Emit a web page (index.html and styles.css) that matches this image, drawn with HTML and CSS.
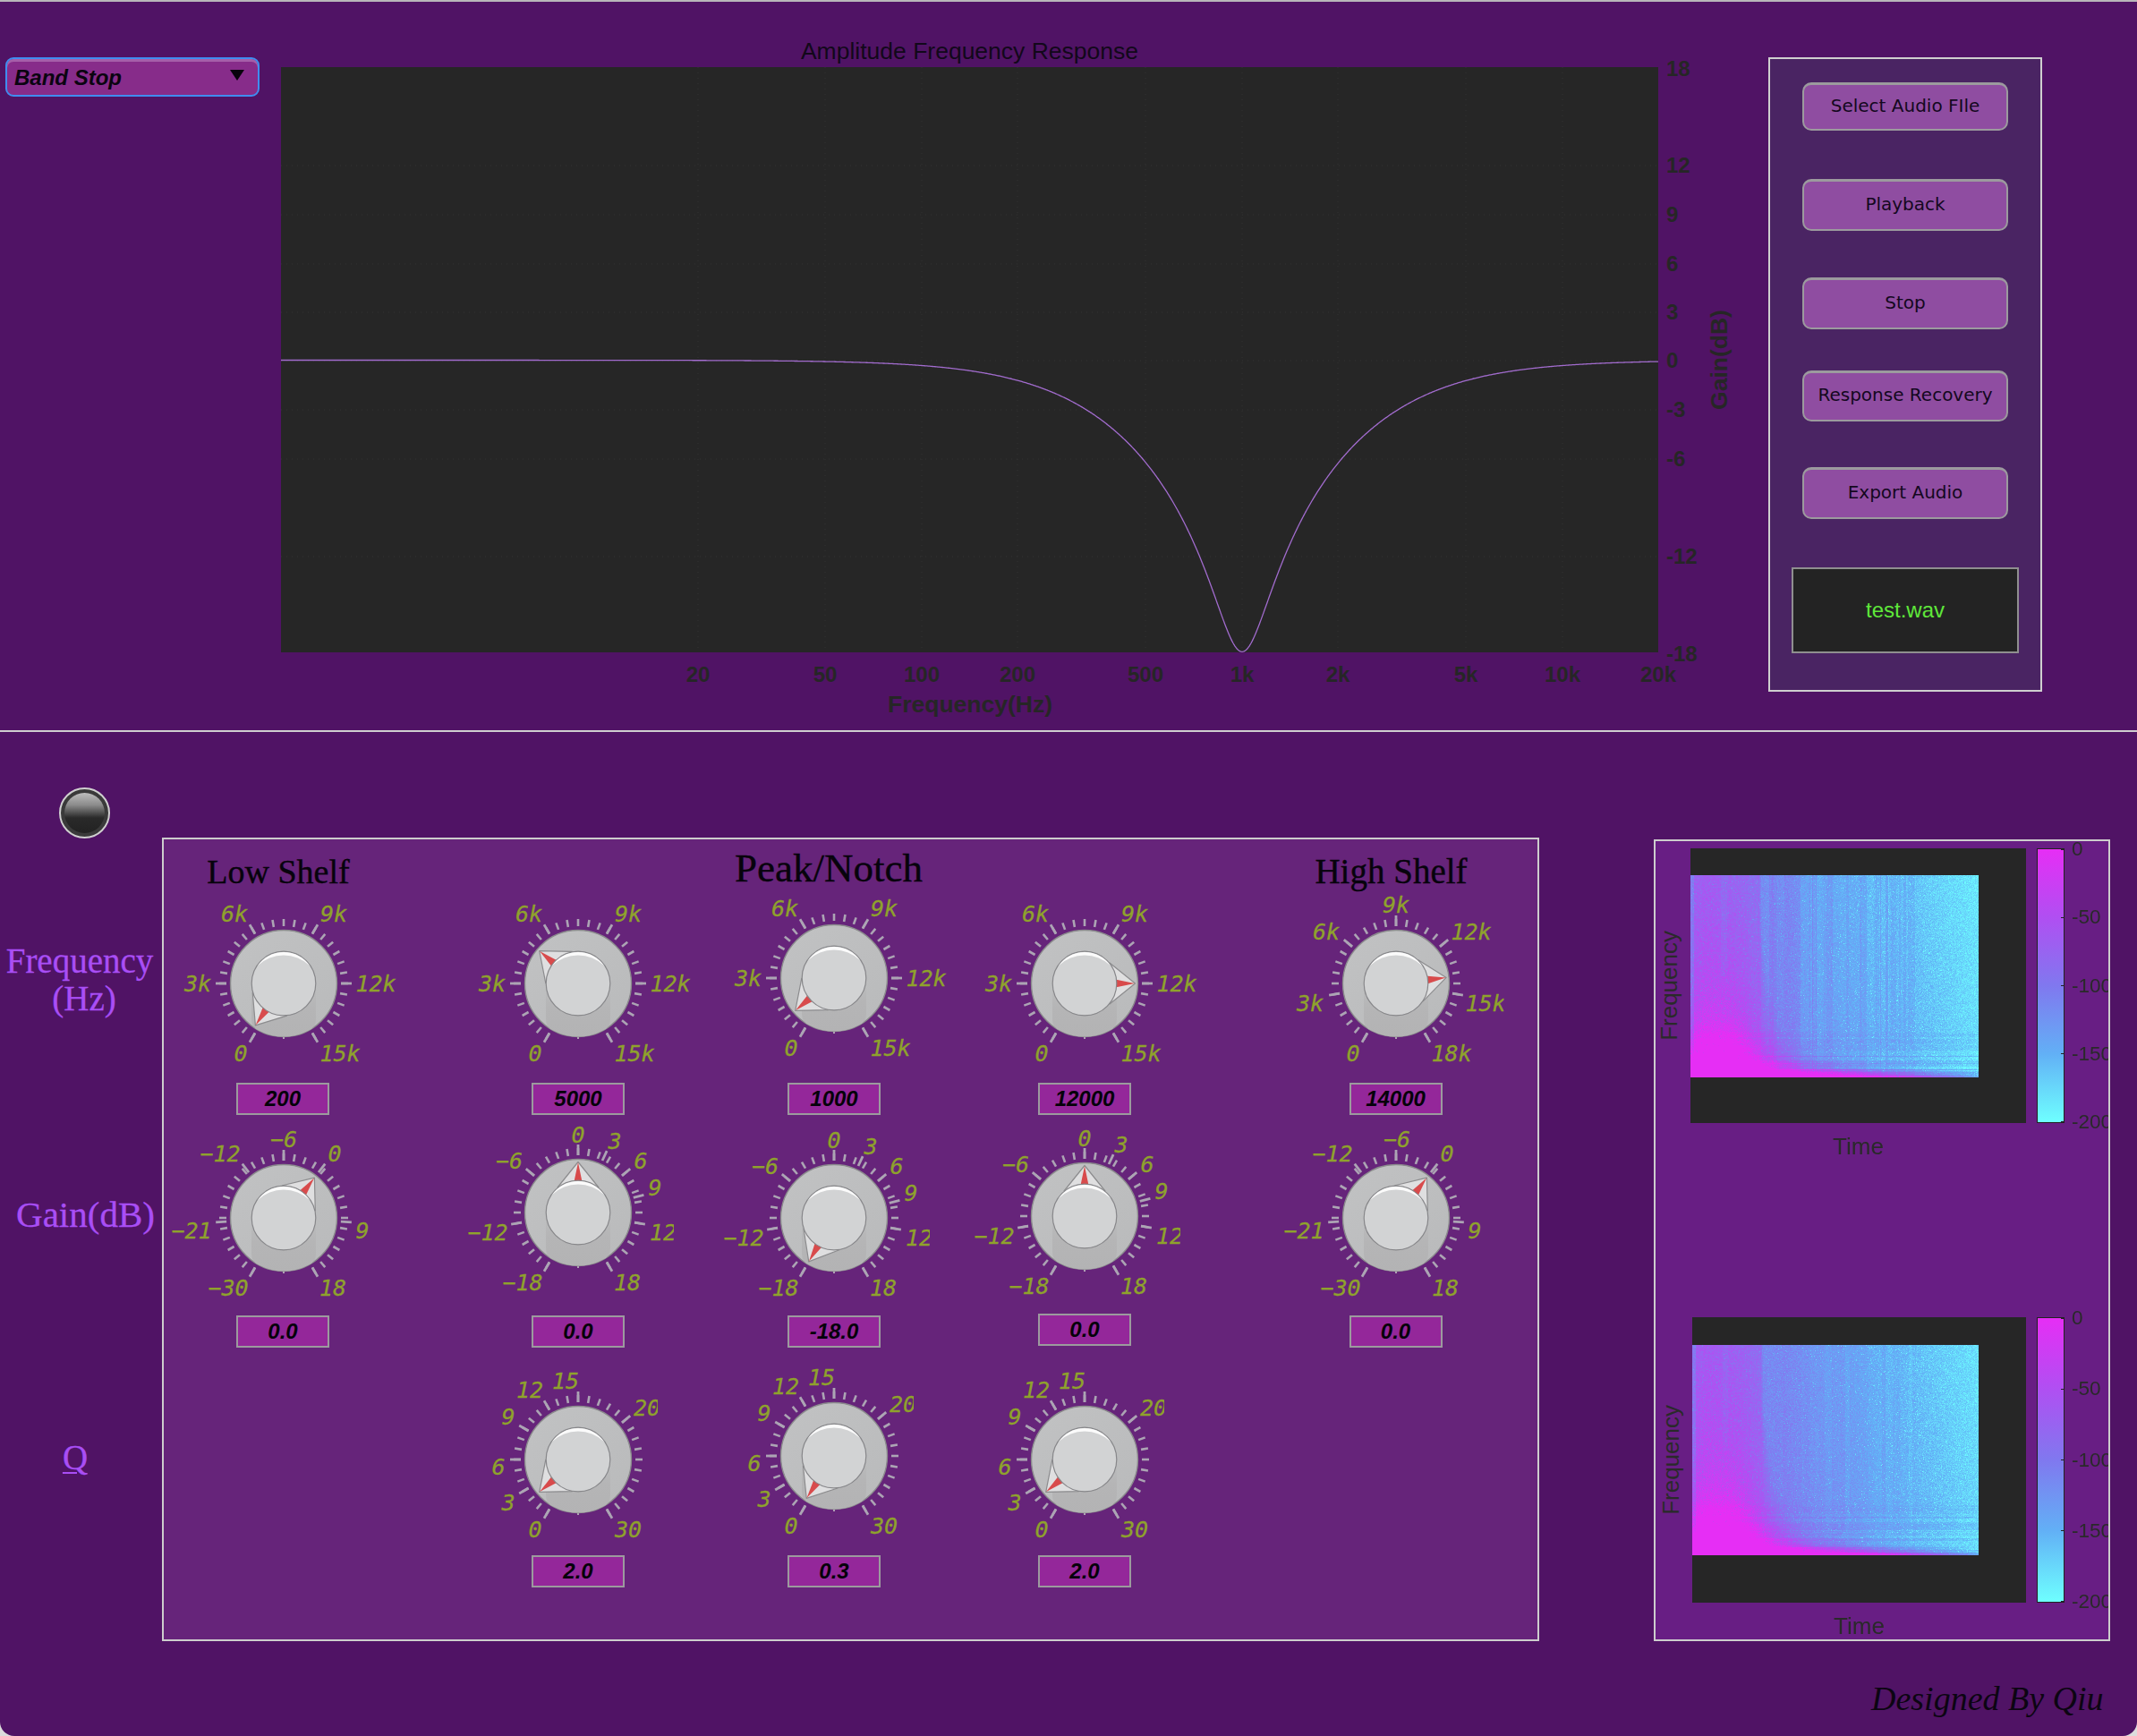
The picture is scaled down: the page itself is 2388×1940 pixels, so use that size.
FILE: index.html
```html
<!DOCTYPE html>
<html lang="en">
<head>
<meta charset="utf-8">
<title>Equalizer</title>
<link rel="stylesheet" href="styles.css">
</head>
<body>
<svg class="defs" aria-hidden="true">
  <defs>
    <linearGradient id="base-fill" x1="0" y1="0" x2="1" y2="1">
      <stop offset="0" stop-color="#c1c2c3"/><stop offset="1" stop-color="#b9babb"/>
    </linearGradient>
    <linearGradient id="shade-fill" x1="0" y1="0" x2="0" y2="1">
      <stop offset="0" stop-color="#bcbdbe"/><stop offset="0.45" stop-color="#b5b5b6"/><stop offset="1" stop-color="#b3b3b4"/>
    </linearGradient>
    <line id="tick" class="tick" y1="-64" y2="-72"/>
    <line id="major" class="tick tick-major" y1="-64" y2="-76"/>
    <g id="minor">
      <use href="#tick" transform="rotate(-150)"/><use href="#tick" transform="rotate(-140)"/><use href="#tick" transform="rotate(-130)"/><use href="#tick" transform="rotate(-120)"/><use href="#tick" transform="rotate(-110)"/><use href="#tick" transform="rotate(-100)"/><use href="#tick" transform="rotate(-90)"/><use href="#tick" transform="rotate(-80)"/><use href="#tick" transform="rotate(-70)"/><use href="#tick" transform="rotate(-60)"/><use href="#tick" transform="rotate(-50)"/><use href="#tick" transform="rotate(-40)"/><use href="#tick" transform="rotate(-30)"/><use href="#tick" transform="rotate(-20)"/><use href="#tick" transform="rotate(-10)"/><use href="#tick"/><use href="#tick" transform="rotate(10)"/><use href="#tick" transform="rotate(20)"/><use href="#tick" transform="rotate(30)"/><use href="#tick" transform="rotate(40)"/><use href="#tick" transform="rotate(50)"/><use href="#tick" transform="rotate(60)"/><use href="#tick" transform="rotate(70)"/><use href="#tick" transform="rotate(80)"/><use href="#tick" transform="rotate(90)"/><use href="#tick" transform="rotate(100)"/><use href="#tick" transform="rotate(110)"/><use href="#tick" transform="rotate(120)"/><use href="#tick" transform="rotate(130)"/><use href="#tick" transform="rotate(140)"/><use href="#tick" transform="rotate(150)"/>
    </g>
    <g id="maj-freq"><use href="#major" transform="rotate(-150)"/><use href="#major" transform="rotate(-90)"/><use href="#major" transform="rotate(-30)"/><use href="#major" transform="rotate(30)"/><use href="#major" transform="rotate(90)"/><use href="#major" transform="rotate(150)"/></g>
    <g id="maj-hsfreq"><use href="#major" transform="rotate(-150)"/><use href="#major" transform="rotate(-100)"/><use href="#major" transform="rotate(-50)"/><use href="#major"/><use href="#major" transform="rotate(50)"/><use href="#major" transform="rotate(100)"/><use href="#major" transform="rotate(150)"/></g>
    <g id="maj-shelf"><use href="#major" transform="rotate(-150)"/><use href="#major" transform="rotate(-93.75)"/><use href="#major" transform="rotate(-37.5)"/><use href="#major"/><use href="#major" transform="rotate(37.5)"/><use href="#major" transform="rotate(93.75)"/><use href="#major" transform="rotate(150)"/></g>
    <g id="maj-peak"><use href="#major" transform="rotate(-150)"/><use href="#major" transform="rotate(-100)"/><use href="#major" transform="rotate(-50)"/><use href="#major"/><use href="#major" transform="rotate(25)"/><use href="#major" transform="rotate(50)"/><use href="#major" transform="rotate(75)"/><use href="#major" transform="rotate(100)"/><use href="#major" transform="rotate(150)"/></g>
    <g id="maj-q"><use href="#major" transform="rotate(-150)"/><use href="#major" transform="rotate(-120)"/><use href="#major" transform="rotate(-90)"/><use href="#major" transform="rotate(-60)"/><use href="#major" transform="rotate(-30)"/><use href="#major"/><use href="#major" transform="rotate(50)"/><use href="#major" transform="rotate(150)"/></g>
    <g id="knob-base">
      <line class="tick-notch" y1="60" y2="62"/>
      <circle class="knob-rim" r="59.5"/>
      <path class="knob-shade" d="M-36 0V40Q-36 50-27 53A59 59 0 0 0 27 53Q36 50 36 40V0Z"/>
    </g>
    <g id="pointer">
      <path class="pointer-body" d="M0-56.5L-23-28H23Z"/>
      <path class="pointer-red" d="M0-56L-4.8-33H4.8Z"/>
    </g>
    <g id="knob-cap">
      <circle class="knob-cap" r="35.8"/>
      <path class="knob-shine" d="M-29-20A35.4 35.4 0 0 1 29-20A42 42 0 0 0-29-20Z"/>
    </g>
  </defs>
</svg>

<div class="app">
  <section class="top">
    <div class="dropdown"><span>Band Stop</span><i class="caret"></i></div>

    <svg class="response" viewBox="314 30 1640 786">
      <rect class="plot-bg" x="314" y="75" width="1539" height="654"/>
      <path class="plot-grid" d="M780 75V729M922 75V729M1030 75V729M1137 75V729M1280 75V729M1388 75V729M1495 75V729M1638 75V729M1746 75V729M314 185H1853M314 240H1853M314 295H1853M314 349H1853M314 403H1853M314 458H1853M314 513H1853M314 622H1853"/>
      <path id="curve" class="plot-curve" d=""/>
      <text class="plot-title" x="1083.5" y="57">Amplitude Frequency Response</text>
      <g class="plot-ticks">
        <text x="1862" y="76">18</text><text x="1862" y="184">12</text><text x="1862" y="239">9</text><text x="1862" y="294">6</text><text x="1862" y="348">3</text><text x="1862" y="402">0</text><text x="1862" y="457">-3</text><text x="1862" y="512">-6</text><text x="1862" y="621">-12</text><text x="1862" y="730">-18</text>
      </g>
      <g class="plot-ticks plot-ticks-x">
        <text x="780" y="753">20</text><text x="922" y="753">50</text><text x="1030" y="753">100</text><text x="1137" y="753">200</text><text x="1280" y="753">500</text><text x="1388" y="753">1k</text><text x="1495" y="753">2k</text><text x="1638" y="753">5k</text><text x="1746" y="753">10k</text><text x="1853" y="753">20k</text>
      </g>
      <text class="plot-axis" x="1084" y="787">Frequency(Hz)</text>
      <text class="plot-axis" transform="translate(1921 402) rotate(-90)">Gain(dB)</text>
    </svg>

    <aside class="transport">
      <button class="btn btn-select">Select Audio FIle</button>
      <button class="btn btn-play">Playback</button>
      <button class="btn btn-stop">Stop</button>
      <button class="btn btn-recover">Response Recovery</button>
      <button class="btn btn-export">Export Audio</button>
      <div class="file-name">test.wav</div>
    </aside>
  </section>

  <section class="bottom">
    <div class="side">
      <div class="led"><div class="led-glass"></div></div>
      <div class="side-label side-freq">Frequency<br><span class="side-unit">(Hz)</span></div>
      <div class="side-label side-gain">Gain(dB)</div>
      <div class="side-label side-q">Q</div>
    </div>

    <div class="eq">
      <h2 class="eq-head head-low">Low Shelf</h2>
      <h2 class="eq-head head-peak">Peak/Notch</h2>
      <h2 class="eq-head head-high">High Shelf</h2>

      <!-- Low shelf -->
      <div class="knob row-1 col-1">
        <svg class="dial" viewBox="-130 -110 260 220"><use href="#minor"/><use href="#maj-freq"/><use href="#knob-base"/><use href="#pointer" transform="rotate(-146)"/><use href="#knob-cap"/>
          <g class="scale"><text x="-48" y="78">0</text><text x="-96" y="0">3k</text><text x="-55" y="-78">6k</text><text x="56" y="-78">9k</text><text x="103" y="0">12k</text><text x="63" y="78">15k</text></g></svg>
        <div class="value">200</div>
      </div>
      <div class="knob row-2 col-1">
        <svg class="dial" viewBox="-130 -110 260 220"><use href="#minor"/><use href="#maj-shelf"/><use href="#knob-base"/><use href="#pointer" transform="rotate(37.5)"/><use href="#knob-cap"/>
          <g class="scale"><text x="-62" y="78">−30</text><text x="-103" y="14">−21</text><text x="-71" y="-72">−12</text><text x="0" y="-88">−6</text><text x="57" y="-72">0</text><text x="88" y="14">9</text><text x="55" y="78">18</text></g></svg>
        <div class="value">0.0</div>
      </div>

      <!-- Peak 1 -->
      <div class="knob row-1 col-2">
        <svg class="dial" viewBox="-130 -110 260 220"><use href="#minor"/><use href="#maj-freq"/><use href="#knob-base"/><use href="#pointer" transform="rotate(-50)"/><use href="#knob-cap"/>
          <g class="scale"><text x="-48" y="78">0</text><text x="-96" y="0">3k</text><text x="-55" y="-78">6k</text><text x="56" y="-78">9k</text><text x="103" y="0">12k</text><text x="63" y="78">15k</text></g></svg>
        <div class="value">5000</div>
      </div>
      <div class="knob row-2 col-2 lift-6">
        <svg class="dial clip-107" viewBox="-130 -110 260 220"><use href="#minor"/><use href="#maj-peak"/><use href="#knob-base"/><use href="#pointer"/><use href="#knob-cap"/>
          <g class="scale"><text x="-62" y="78">−18</text><text x="-101" y="22">−12</text><text x="-77" y="-58">−6</text><text x="0" y="-87">0</text><text x="41" y="-80">3</text><text x="70" y="-58">6</text><text x="86" y="-28">9</text><text x="95" y="22">12</text><text x="55" y="78">18</text></g></svg>
        <div class="value">0.0</div>
      </div>
      <div class="knob row-3 col-2">
        <svg class="dial clip-89" viewBox="-130 -110 260 220"><use href="#minor"/><use href="#maj-q"/><use href="#knob-base"/><use href="#pointer" transform="rotate(-130)"/><use href="#knob-cap"/>
          <g class="scale"><text x="-48" y="78">0</text><text x="-78" y="48">3</text><text x="-89" y="8">6</text><text x="-78" y="-48">9</text><text x="-54" y="-78">12</text><text x="-14" y="-88">15</text><text x="77" y="-58">20</text><text x="56" y="78">30</text></g></svg>
        <div class="value">2.0</div>
      </div>

      <!-- Peak 2 -->
      <div class="knob row-1 col-3 lift-6">
        <svg class="dial" viewBox="-130 -110 260 220"><use href="#minor"/><use href="#maj-freq"/><use href="#knob-base"/><use href="#pointer" transform="rotate(-130)"/><use href="#knob-cap"/>
          <g class="scale"><text x="-48" y="78">0</text><text x="-96" y="0">3k</text><text x="-55" y="-78">6k</text><text x="56" y="-78">9k</text><text x="103" y="0">12k</text><text x="63" y="78">15k</text></g></svg>
        <div class="value">1000</div>
      </div>
      <div class="knob row-2 col-3">
        <svg class="dial clip-107" viewBox="-130 -110 260 220"><use href="#minor"/><use href="#maj-peak"/><use href="#knob-base"/><use href="#pointer" transform="rotate(-150)"/><use href="#knob-cap"/>
          <g class="scale"><text x="-62" y="78">−18</text><text x="-101" y="22">−12</text><text x="-77" y="-58">−6</text><text x="0" y="-87">0</text><text x="41" y="-80">3</text><text x="70" y="-58">6</text><text x="86" y="-28">9</text><text x="95" y="22">12</text><text x="55" y="78">18</text></g></svg>
        <div class="value">-18.0</div>
      </div>
      <div class="knob row-3 col-3 lift-4">
        <svg class="dial clip-89" viewBox="-130 -110 260 220"><use href="#minor"/><use href="#maj-q"/><use href="#knob-base"/><use href="#pointer" transform="rotate(-147)"/><use href="#knob-cap"/>
          <g class="scale"><text x="-48" y="78">0</text><text x="-78" y="48">3</text><text x="-89" y="8">6</text><text x="-78" y="-48">9</text><text x="-54" y="-78">12</text><text x="-14" y="-88">15</text><text x="77" y="-58">20</text><text x="56" y="78">30</text></g></svg>
        <div class="value">0.3</div>
      </div>

      <!-- Peak 3 -->
      <div class="knob row-1 col-4">
        <svg class="dial" viewBox="-130 -110 260 220"><use href="#minor"/><use href="#maj-freq"/><use href="#knob-base"/><use href="#pointer" transform="rotate(90)"/><use href="#knob-cap"/>
          <g class="scale"><text x="-96" y="0">3k</text><text x="-48" y="78">0</text><text x="-55" y="-78">6k</text><text x="56" y="-78">9k</text><text x="103" y="0">12k</text><text x="63" y="78">15k</text></g></svg>
        <div class="value">12000</div>
      </div>
      <div class="knob row-2 col-4 lift-2-all">
        <svg class="dial clip-107" viewBox="-130 -110 260 220"><use href="#minor"/><use href="#maj-peak"/><use href="#knob-base"/><use href="#pointer"/><use href="#knob-cap"/>
          <g class="scale"><text x="-62" y="78">−18</text><text x="-101" y="22">−12</text><text x="-77" y="-58">−6</text><text x="0" y="-87">0</text><text x="41" y="-80">3</text><text x="70" y="-58">6</text><text x="86" y="-28">9</text><text x="95" y="22">12</text><text x="55" y="78">18</text></g></svg>
        <div class="value">0.0</div>
      </div>
      <div class="knob row-3 col-4">
        <svg class="dial clip-89" viewBox="-130 -110 260 220"><use href="#minor"/><use href="#maj-q"/><use href="#knob-base"/><use href="#pointer" transform="rotate(-130)"/><use href="#knob-cap"/>
          <g class="scale"><text x="-48" y="78">0</text><text x="-78" y="48">3</text><text x="-89" y="8">6</text><text x="-78" y="-48">9</text><text x="-54" y="-78">12</text><text x="-14" y="-88">15</text><text x="77" y="-58">20</text><text x="56" y="78">30</text></g></svg>
        <div class="value">2.0</div>
      </div>

      <!-- High shelf -->
      <div class="knob row-1 col-5">
        <svg class="dial clip-121" viewBox="-130 -110 260 220"><use href="#minor"/><use href="#maj-hsfreq"/><use href="#knob-base"/><use href="#pointer" transform="rotate(83.3)"/><use href="#knob-cap"/>
          <g class="scale"><text x="-48" y="78">0</text><text x="-96" y="22">3k</text><text x="-78" y="-58">6k</text><text x="0" y="-87.5">9k</text><text x="84" y="-58">12k</text><text x="100" y="22">15k</text><text x="62" y="78">18k</text></g></svg>
        <div class="value">14000</div>
      </div>
      <div class="knob row-2 col-5">
        <svg class="dial" viewBox="-130 -110 260 220"><use href="#minor"/><use href="#maj-shelf"/><use href="#knob-base"/><use href="#pointer" transform="rotate(37.5)"/><use href="#knob-cap"/>
          <g class="scale"><text x="-62" y="78">−30</text><text x="-103" y="14">−21</text><text x="-71" y="-72">−12</text><text x="1" y="-88">−6</text><text x="57" y="-72">0</text><text x="88" y="14">9</text><text x="55" y="78">18</text></g></svg>
        <div class="value">0.0</div>
      </div>
    </div>

    <div class="right">
      <div class="spectra">
        <figure class="chart chart-a">
          <figcaption class="chart-y">Frequency</figcaption>
          <div class="chart-plot"><canvas id="spec-a" class="chart-image" width="322" height="226"></canvas></div>
          <div class="cbar"><i></i><i></i><i></i><i></i><i></i></div>
          <div class="cbar-labels"><span>0</span><span>-50</span><span>-100</span><span>-150</span><span>-200</span></div>
          <div class="chart-x">Time</div>
        </figure>
        <figure class="chart chart-b">
          <figcaption class="chart-y">Frequency</figcaption>
          <div class="chart-plot"><canvas id="spec-b" class="chart-image" width="320" height="235"></canvas></div>
          <div class="cbar"><i></i><i></i><i></i><i></i><i></i></div>
          <div class="cbar-labels"><span>0</span><span>-50</span><span>-100</span><span>-150</span><span>-200</span></div>
          <div class="chart-x">Time</div>
        </figure>
      </div>
      <div class="signature">Designed By Qiu</div>
    </div>
  </section>
</div>
<script src="app.js"></script>
</body>
</html>
```

FILE: styles.css
```css
* { box-sizing: border-box; }
html, body { margin: 0; height: 100%; }
body { background: #dcdcdc; overflow: hidden; font-family: "Liberation Sans", sans-serif; }
.defs { position: absolute; width: 0; height: 0; }

.app {
  width: 2388px; height: 1940px; background: #501365; overflow: hidden;
  border-top: 2px solid #b9b6ba; border-radius: 0 0 16px 16px;
}

/* ---- top ---- */
.top { height: 814px; display: flex; align-items: flex-start; }
.dropdown {
  width: 284px; height: 44px; margin: 62px 24px 0 6px; padding: 2px 15px 0 8px;
  display: flex; align-items: center; justify-content: space-between;
  background: #872c8a; border: 2px solid #3f8df0; border-radius: 9px;
  box-shadow: inset 0 3px 0 #a65fa9;
  font: italic bold 24px "Liberation Sans", sans-serif; color: #0a0410;
}
.caret { width: 0; height: 0; margin-bottom: 6px; border: 8px solid transparent; border-top: 12px solid #08030c; border-bottom: 0; }

.response { width: 1640px; height: 786px; margin-top: 28px; flex: none; }
.plot-bg { fill: #262626; }
.plot-grid { fill: none; stroke: #333; stroke-width: 1; stroke-dasharray: 1 5; }
.plot-curve { fill: none; stroke: #a26cce; stroke-width: 1.3; }
.plot-title { font-size: 26.5px; fill: #12081a; text-anchor: middle; dominant-baseline: central; }
.plot-ticks text { font-size: 24px; font-weight: bold; fill: #262626; dominant-baseline: central; }
.plot-ticks-x text { text-anchor: middle; }
.plot-axis { font-size: 26.5px; font-weight: bold; fill: #262626; text-anchor: middle; dominant-baseline: central; }

.transport {
  width: 306px; height: 709px; margin: 62px 0 0 22px; flex: none;
  display: flex; flex-direction: column; align-items: center;
  background: #4a2463; border: 2px solid #cfcfcf;
}
.btn {
  width: 230px; padding: 0 0 4px; background: #8f4da1; color: #14081e;
  border: 2px solid #9c9a9e; border-top-width: 3px; border-radius: 10px;
  font: 20px "DejaVu Sans", sans-serif;
}
.btn-select { height: 54px; margin-top: 26px; }
.btn-play { height: 58px; margin-top: 54px; }
.btn-stop { height: 58px; margin-top: 52px; }
.btn-recover { height: 57px; margin-top: 46px; }
.btn-export { height: 58px; margin-top: 51px; }
.file-name {
  width: 254px; height: 96px; margin-top: 54px; display: flex; align-items: center; justify-content: center;
  background: #232323; border: 2px solid #8f8f8f; color: #5fe83a; font-size: 24px;
}

/* ---- bottom ---- */
.bottom { display: flex; align-items: flex-start; height: 1122px; border-top: 2px solid #cfcdd0; }

.side { width: 181px; flex: none; }
.led {
  width: 57px; height: 57px; margin: 62px 0 0 66px; padding: 4px; border-radius: 50%;
  background: #3a3a3a; border: 2px solid #cfcfcf;
}
.led-glass { width: 100%; height: 100%; border-radius: 50%; background: linear-gradient(#bdbdbd 0, #8c8c8c 30%, #2a2a2a 62%, #222 100%); }
.side-label { font: 39px/42px "Liberation Serif", serif; color: #a94ef5; text-align: center; -webkit-text-stroke: 0.3px #a94ef5; }
.side-freq { margin-top: 116px; padding-right: 3px; }
.side-unit { margin-left: 10px; }
.side-gain { margin-top: 199px; padding-left: 10px; font-size: 41px; white-space: nowrap; }
.side-q { margin-top: 230px; padding-right: 13px; text-decoration: underline; text-decoration-thickness: 2px; text-underline-offset: 3px; }

.eq {
  width: 1539px; height: 898px; margin-top: 118px; flex: none;
  display: grid; grid-template-columns: 268px 390px 182px 378px 1fr; grid-template-rows: 61px 262px 270px 1fr;
  background: #66247a; border: 2px solid #cdcdcd;
}
.eq-head { margin: 0; font: normal 38px/44px "Liberation Serif", serif; color: #07030c; text-align: center; white-space: nowrap; -webkit-text-stroke: 0.4px #07030c; }
.head-low { grid-area: 1 / 1; padding: 14px 12px 0 0; }
.head-peak { grid-area: 1 / 2 / 1 / 5; padding-top: 10px; font-size: 45px; }
.head-high { grid-area: 1 / 5; padding: 14px 10px 0 0; font-size: 39px; }

.knob { width: 260px; justify-self: center; display: flex; flex-direction: column; align-items: center; }
.row-1 { grid-row: 2; } .row-2 { grid-row: 3; } .row-3 { grid-row: 4; }
.col-1 { grid-column: 1; } .col-2 { grid-column: 2; } .col-3 { grid-column: 3; } .col-4 { grid-column: 4; } .col-5 { grid-column: 5; }

.dial { display: block; width: 260px; height: 220px; margin: -10px 0; flex: none; overflow: hidden; }
.clip-107 { clip-path: inset(0 23px 0 0); }
.clip-89 { clip-path: inset(0 41px 0 0); }
.clip-121 { clip-path: inset(0 9px 0 0); }

.lift-6 .dial { margin-top: -16px; margin-bottom: -4px; }
.lift-4 .dial { margin-top: -14px; margin-bottom: -6px; }
.lift-2-all { margin-top: -2px; }

.tick { stroke: #aca4b4; stroke-width: 2.6; }
.tick-major { stroke: #aca4b4; stroke-width: 2.8; }
.tick-notch { stroke: #cfcfcf; stroke-width: 1.5; }
.knob-rim { fill: url(#base-fill); stroke: #8b8b8d; stroke-width: 1.4; }
.knob-shade { fill: url(#shade-fill); }
.pointer-body { fill: #dfdfe0; stroke: #8c8c8e; stroke-width: 1.2; stroke-linejoin: round; }
.pointer-red { fill: #d84b4c; }
.knob-cap { fill: #d2d3d4; stroke: #87878a; stroke-width: 1.2; }
.knob-shine { fill: #fbfbfb; }
.scale text { font: italic 25px "DejaVu Sans Mono", monospace; fill: #8fa22c; stroke: #8fa22c; stroke-width: 0.3px; text-anchor: middle; dominant-baseline: central; }

.value {
  width: 104px; height: 36px; display: flex; align-items: center; justify-content: center; flex: none;
  background: #94279a; border: 2px solid #9c9a9e; color: #05020a;
  font: italic bold 24px "Liberation Sans", sans-serif;
}
.col-1 .value { margin-right: 2px; }
.row-1 .value { margin-top: 11px; }
.row-2 .value { margin-top: 9px; }
.row-3 .value { margin-top: 7px; }

.right { margin-left: 128px; width: 510px; flex: none; margin-top: 120px; }
.spectra { height: 896px; padding-top: 8px; background: #681e84; border: 2px solid #cdcdcd; overflow: hidden; }
.chart { margin: 0; display: grid; grid-template-columns: var(--y) var(--w) 43px 1fr; grid-template-rows: auto 41px; font-size: 26px; color: #2a2a2a; }
.chart-a { --y: 39px; --w: 375px; }
.chart-b { --y: 41px; --w: 373px; margin-top: 176px; }
.chart-y {
  justify-self: start; align-self: center; writing-mode: vertical-rl; transform: rotate(180deg);
  line-height: 30px; margin-right: -20px; white-space: nowrap;
}
.chart-b .chart-y { margin-left: 2px; }
.chart-plot { background: #262626; height: 307px; padding-top: 30px; }
.chart-b .chart-plot { height: 319px; padding-top: 31px; }
.chart-image { display: block; }
.cbar {
  margin-left: 12px; width: 31px; border: 1px solid #222; display: flex; flex-direction: column; justify-content: space-between; align-items: flex-end;
  background: linear-gradient(#e62ef5 0, #b04ff2 25%, #8078ef 50%, #62b0f6 75%, #6effff 100%);
}
.cbar i { display: block; width: 3px; height: 1px; background: #222; }
.cbar-labels {
  margin: -11px 0 -11px 8px; display: flex; flex-direction: column; justify-content: space-between;
  font-size: 22.5px; line-height: 24px; white-space: nowrap;
}
.chart-x { grid-column: 2; align-self: end; text-align: center; line-height: 30px; }
.signature {
  margin-top: 42px; padding-left: 243px; white-space: nowrap;
  font: italic 38px "Liberation Serif", serif; color: #0c0512;
}
```

FILE: app.js
```js
// Amplitude response of the peak/notch band (f0 = 1 kHz, -18 dB) and the two spectrogram images.
(function () {
  var A = Math.pow(10, -18 / 40), Q = 1;
  var pts = [];
  for (var x = 314; x <= 1853; x += 1) {
    var w = Math.pow(10, (x - 1388) / 357.67);
    var k = (1 - w * w) * (1 - w * w);
    var num = k + Math.pow(w * A / Q, 2);
    var den = k + Math.pow(w / (A * Q), 2);
    var db = 10 * Math.log10(num / den);
    pts.push((x === 314 ? 'M' : 'L') + x + ' ' + (402.5 - db * 18.1).toFixed(2));
  }
  document.getElementById('curve').setAttribute('d', pts.join(''));

  var stops = [
    [0.00, 110, 255, 255],
    [0.25, 98, 176, 246],
    [0.50, 128, 124, 240],
    [0.75, 176, 79, 242],
    [1.00, 230, 46, 245]
  ];
  function colour(v) {
    v = Math.max(0, Math.min(1, v));
    for (var i = 1; i < stops.length; i++) {
      if (v <= stops[i][0]) {
        var a = stops[i - 1], b = stops[i], t = (v - a[0]) / (b[0] - a[0]);
        return [a[1] + (b[1] - a[1]) * t, a[2] + (b[2] - a[2]) * t, a[3] + (b[3] - a[3]) * t];
      }
    }
    return stops[4].slice(1);
  }
  function rng(seed) {
    return function () {
      seed = (seed * 1664525 + 1013904223) >>> 0;
      return seed / 4294967296;
    };
  }
  function smooth(a, b, x) {
    var t = Math.max(0, Math.min(1, (x - a) / (b - a)));
    return t * t * (3 - 2 * t);
  }
  function paint(id, seed, streak, lift) {
    var c = document.getElementById(id), g = c.getContext('2d');
    var W = c.width, H = c.height, img = g.createImageData(W, H), r = rng(seed);
    var cols = [], rows = [], i, v = 0;
    for (i = 0; i < W; i++) { if (r() < 0.3) v = (r() - 0.5) * 2; cols.push(v); }
    v = 0;
    for (i = 0; i < H; i++) { if (r() < 0.5) v = (r() - 0.5) * 2; rows.push(v); }
    var edge = 0.237 * 322 / W;
    for (var y = 0; y < H; y++) {
      for (var x = 0; x < W; x++) {
        var t = x / W, f = 1 - y / H;
        var val = 0.62 + lift - 0.5 * t - 0.05 * f;
        var blur = 0.006 + 0.22 * Math.pow(1 - f, 3);
        val += (1 - smooth(edge - blur * 0.2, edge + blur, t)) * (0.12 + 0.06 * (1 - f));
        // the darker gap between the two early bursts
        if (t > 0.105 && t < 0.125 && f > 0.5) val -= 0.05;
        if (t < 0.012) val -= 0.14;
        if (t < 0.05) val -= 0.06 * (1 - t / 0.05);
        val += Math.exp(-Math.pow((t - 0.13) / 0.1, 2)) * Math.exp(-f / 0.3) * 0.32;
        var spread = 0.012 + 0.13 * Math.pow(1 - t, 2.6);
        val += Math.exp(-f / spread) * (0.12 + 0.7 * (1 - Math.pow(t, 6)));
        if (f < 0.04) val += 0.12 * (1 - t * t * t);
        if (t > 0.2 && t < 0.78) val += cols[x] * streak * (0.5 + 0.5 * Math.min(1, f * 3));
        if (f < 0.24) val += rows[y] * 0.11 * (1 - f * 3);
        val += (r() - 0.5) * 0.15;
        if (r() < 0.03) val -= 0.17;
        var col = colour(val), p = (y * W + x) * 4;
        img.data[p] = col[0]; img.data[p + 1] = col[1]; img.data[p + 2] = col[2]; img.data[p + 3] = 255;
      }
    }
    g.putImageData(img, 0, 0);
  }
  paint('spec-a', 12345, 0.08, 0);
  paint('spec-b', 98765, 0.03, 0.02);
})();
```
